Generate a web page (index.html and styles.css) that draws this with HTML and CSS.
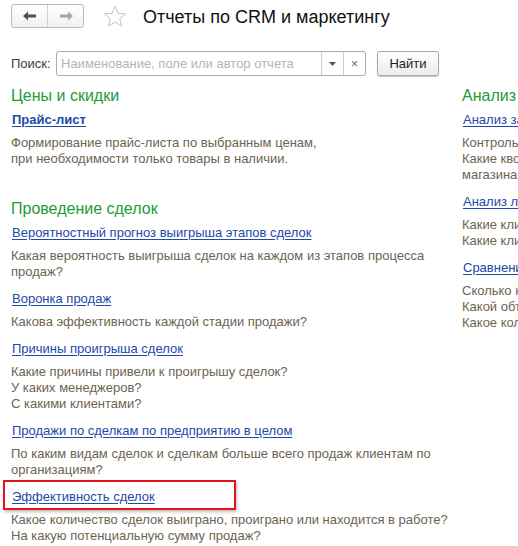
FILE: index.html
```html
<!DOCTYPE html>
<html lang="ru">
<head>
<meta charset="utf-8">
<title>Отчеты по CRM и маркетингу</title>
<link rel="stylesheet" href="styles.css">
</head>
<body>
<div class="page">
  <header class="header">
    <div class="nav">
      <button class="nav-btn" aria-label="Назад">
        <svg width="14" height="10" viewBox="0 0 14 10"><path d="M0 5 L5 0.5 V3.5 H13 V6.5 H5 V9.5 Z" fill="#4f4f4f"/></svg>
      </button>
      <button class="nav-btn" aria-label="Вперед">
        <svg width="14" height="10" viewBox="0 0 14 10"><path d="M14 5 L9 0.5 V3.5 H1 V6.5 H9 V9.5 Z" fill="#a6a6a6"/></svg>
      </button>
    </div>
    <svg class="star" width="24" height="23" viewBox="0 0 24 23"><path d="M12 1.2 L14.9 8.3 L22.6 8.8 L16.7 13.7 L18.6 21.2 L12 17.1 L5.4 21.2 L7.3 13.7 L1.4 8.8 L9.1 8.3 Z" fill="none" stroke="#c4c4c4" stroke-width="1" stroke-linejoin="round"/></svg>
    <h1 class="title">Отчеты по CRM и маркетингу</h1>
  </header>

  <div class="search">
    <span class="search-label">Поиск:</span>
    <div class="search-field">
      <span class="placeholder">Наименование, поле или автор отчета</span>
      <span class="field-btn"><svg width="7" height="4" viewBox="0 0 7 4"><path d="M0 0 H7 L3.5 4 Z" fill="#555"/></svg></span>
      <span class="field-btn clear">×</span>
    </div>
    <button class="find-btn">Найти</button>
  </div>

  <div class="columns">
    <div class="col col-main">
      <section class="group">
        <h2 class="group-title">Цены и скидки</h2>
        <div class="item">
          <a class="link bold" href="#">Прайс-лист</a>
          <p class="desc">Формирование прайс-листа по выбранным ценам,<br>при необходимости только товары в наличии.</p>
        </div>
      </section>

      <section class="group">
        <h2 class="group-title">Проведение сделок</h2>
        <div class="item">
          <a class="link" href="#">Вероятностный прогноз выигрыша этапов сделок</a>
          <p class="desc">Какая вероятность выигрыша сделок на каждом из этапов процесса<br>продаж?</p>
        </div>
        <div class="item">
          <a class="link" href="#">Воронка продаж</a>
          <p class="desc">Какова эффективность каждой стадии продажи?</p>
        </div>
        <div class="item">
          <a class="link" href="#">Причины проигрыша сделок</a>
          <p class="desc">Какие причины привели к проигрышу сделок?<br>У каких менеджеров?<br>С какими клиентами?</p>
        </div>
        <div class="item">
          <a class="link" href="#">Продажи по сделкам по предприятию в целом</a>
          <p class="desc">По каким видам сделок и сделкам больше всего продаж клиентам по<br>организациям?</p>
        </div>
        <div class="item highlighted">
          <a class="link" href="#">Эффективность сделок</a>
          <p class="desc">Какое количество сделок выиграно, проиграно или находится в работе?<br>На какую потенциальную сумму продаж?</p>
        </div>
      </section>
    </div>

    <div class="col col-side">
      <section class="group">
        <h2 class="group-title">Анализ маркетинга</h2>
        <div class="item">
          <a class="link" href="#">Анализ заказов по рекламным источникам</a>
          <p class="desc">Контроль эффективности рекламных источников.<br>Какие квоты продаж выполнены по<br>магазинам и менеджерам?</p>
        </div>
        <div class="item">
          <a class="link" href="#">Анализ лояльности клиентов</a>
          <p class="desc">Какие клиенты приносят больше всего выручки?<br>Какие клиенты перестали покупать?</p>
        </div>
        <div class="item">
          <a class="link" href="#">Сравнение эффективности акций</a>
          <p class="desc">Сколько новых клиентов привлекла акция?<br>Какой объем продаж принесла акция?<br>Какое количество заказов оформлено?</p>
        </div>
      </section>
    </div>
  </div>
</div>
</body>
</html>
```

FILE: styles.css
```css
html, body {
  margin: 0;
  padding: 0;
  background: #ffffff;
  overflow: hidden;
}

body {
  font-family: "Liberation Sans", Arial, sans-serif;
  font-size: 13px;
  color: #333;
  width: 518px;
  height: 546px;
}

.page {
  padding: 4px 0 0 11px;
}

.header {
  display: flex;
  align-items: center;
  height: 24px;
}

.nav {
  display: flex;
  width: 73px;
  height: 24px;
  box-sizing: border-box;
  border: 1px solid #b9b9b9;
  border-radius: 3px;
  background: linear-gradient(#ffffff, #f1f1f1);
  overflow: hidden;
}

.nav-btn {
  flex: 1;
  display: flex;
  align-items: center;
  justify-content: center;
  border: 0;
  padding: 0;
  margin: 0;
  background: transparent;
}

.nav-btn + .nav-btn {
  border-left: 1px solid #d0d0d0;
}

.star {
  margin-left: 19px;
  display: block;
}

.title {
  margin: 1px 0 0 16px;
  font-size: 18px;
  font-weight: normal;
  color: #111;
  line-height: 24px;
  white-space: nowrap;
}

.search {
  display: flex;
  align-items: center;
  margin-top: 23px;
  height: 25px;
}

.search-label {
  color: #3d3d3d;
  width: 45px;
}

.search-field {
  display: flex;
  align-items: stretch;
  width: 310px;
  height: 25px;
  box-sizing: border-box;
  border: 1px solid #ababab;
  border-radius: 3px;
  background: #fff;
}

.placeholder {
  flex: 1;
  color: #b4b4b4;
  padding-left: 4px;
  line-height: 23px;
  white-space: nowrap;
  overflow: hidden;
}

.field-btn {
  width: 21px;
  display: flex;
  align-items: center;
  justify-content: center;
  border-left: 1px solid #cfcfcf;
  color: #666;
  font-size: 12px;
}

.find-btn {
  margin-left: 11px;
  width: 62px;
  height: 25px;
  box-sizing: border-box;
  border: 1px solid #a8a8a8;
  border-radius: 3px;
  background: linear-gradient(#ffffff, #ececec);
  box-shadow: 0 1px 1px rgba(0, 0, 0, 0.25);
  font-family: "Liberation Sans", Arial, sans-serif;
  font-size: 13px;
  color: #222;
  padding: 0;
}

.columns {
  display: flex;
  margin-top: 10px;
}

.col-main {
  flex: 0 0 451px;
}

.col-side {
  flex: 0 0 auto;
  white-space: nowrap;
}

.group + .group {
  margin-top: 32px;
}

.group-title {
  margin: 0 0 6px;
  font-size: 16px;
  font-weight: normal;
  line-height: 20px;
  color: #229b38;
  white-space: nowrap;
}

.item {
  position: relative;
}

.item + .item {
  margin-top: 11px;
}

.link {
  display: inline-block;
  margin-left: 1px;
  line-height: 16px;
  color: #2249a6;
  text-decoration: underline;
  text-underline-offset: 2px;
  white-space: nowrap;
}

.link.bold {
  font-weight: bold;
}

.desc {
  margin: 7px 0 0;
  line-height: 16px;
  color: #6e6352;
  white-space: nowrap;
}

.highlighted::before {
  content: "";
  position: absolute;
  left: -8px;
  top: -9px;
  width: 233px;
  height: 30px;
  box-sizing: border-box;
  border: 2px solid #e5121b;
  box-shadow: 1px 2px 3px rgba(0, 0, 0, 0.25);
  pointer-events: none;
}
```
